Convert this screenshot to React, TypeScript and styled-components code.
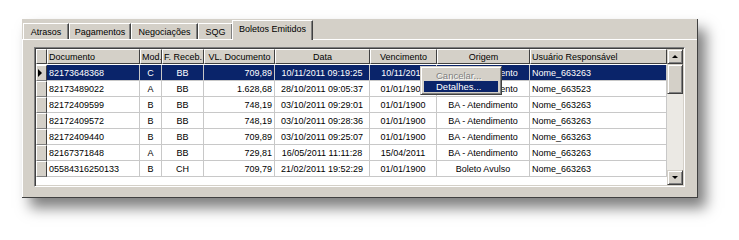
import React from 'react';
import styled, { createGlobalStyle } from 'styled-components';

const GlobalStyle = createGlobalStyle`
  html, body { margin: 0; padding: 0; background: #fff; }
  body {
    font-family: "Liberation Sans", Arial, sans-serif;
    font-size: 9px;
    color: #000;
  }
`;

const FACE = '#d4d0c8';
const SHADOW = '#808080';
const DARK = '#404040';
const HILITE = '#0a246a';
const LINE = '#c8c8c8';

const Stage = styled.div`
  width: 739px;
  height: 240px;
  padding: 19px 0 0 22px;
  box-sizing: border-box;
`;

const Window = styled.div`
  width: 676px;
  height: 179px;
  box-sizing: border-box;
  background: ${FACE};
  border-right: 1px solid ${DARK};
  border-bottom: 1px solid ${DARK};
  box-shadow: 8px 10px 13px rgba(0, 0, 0, 0.5);
  display: flex;
  flex-direction: column;
`;

const TabStrip = styled.div`
  display: flex;
  align-items: flex-end;
  height: 20px;
  padding-left: 1px;
  position: relative;
  z-index: 1;
`;

const Tab = styled.div<{ $w: number; $active?: boolean }>`
  width: ${p => p.$w}px;
  height: ${p => (p.$active ? 20 : 16)}px;
  margin: 0 ${p => (p.$active ? -1 : 0)}px ${p => (p.$active ? -1 : 0)}px;
  box-sizing: border-box;
  background: ${FACE};
  border-top: 1px solid #fff;
  border-left: 1px solid #fff;
  border-right: 1px solid ${DARK};
  box-shadow: inset -1px 0 0 ${SHADOW};
  display: flex;
  align-items: center;
  justify-content: center;
  padding-bottom: ${p => (p.$active ? 3 : 0)}px;
  white-space: nowrap;
`;

const Page = styled.div`
  flex: 1;
  border-top: 1px solid #fff;
  border-left: 1px solid #fff;
  padding: 7px 0 0 11px;
`;

const Grid = styled.div`
  position: relative;
  width: 651px;
  height: 140px;
  box-sizing: border-box;
  border-top: 1px solid ${SHADOW};
  border-left: 1px solid ${SHADOW};
  border-right: 1px solid #fff;
  border-bottom: 1px solid #fff;
  box-shadow: inset 1px 1px 0 ${DARK}, inset -1px -1px 0 ${FACE};
  padding: 1px;
  display: flex;
  background: #fff;
`;

const Table = styled.div`
  width: 631px;
  display: grid;
  grid-template-columns: 11px 93px 22px 42px 71px 95px 67px 93px 137px;
  grid-auto-rows: 16px;
  align-content: start;
  background: #fff;
`;

type Align = 'left' | 'center' | 'right';

const HeadCell = styled.div<{ $align: Align }>`
  height: 15px;
  box-sizing: border-box;
  background: ${FACE};
  border-top: 1px solid #fff;
  border-left: 1px solid #fff;
  border-right: 1px solid ${DARK};
  border-bottom: 1px solid ${DARK};
  display: flex;
  align-items: center;
  justify-content: ${p => (p.$align === 'center' ? 'center' : p.$align === 'right' ? 'flex-end' : 'flex-start')};
  padding: 0 1px;
  white-space: nowrap;
  overflow: hidden;
`;

const Cell = styled.div<{ $align: Align; $sel?: boolean }>`
  box-sizing: border-box;
  background: ${p => (p.$sel ? HILITE : '#fff')};
  color: ${p => (p.$sel ? '#fff' : '#000')};
  border-right: 1px solid ${LINE};
  border-bottom: 1px solid ${LINE};
  display: flex;
  align-items: center;
  justify-content: ${p => (p.$align === 'center' ? 'center' : p.$align === 'right' ? 'flex-end' : 'flex-start')};
  padding: 0 2px;
  white-space: nowrap;
  overflow: hidden;
`;

const Indicator = styled.div`
  box-sizing: border-box;
  background: ${FACE};
  border-top: 1px solid #fff;
  border-left: 1px solid #fff;
  border-right: 1px solid ${DARK};
  border-bottom: 1px solid ${SHADOW};
  display: flex;
  align-items: center;
  padding-left: 1px;
`;

const Arrow = styled.span<{ $dir: 'right' | 'up' | 'down' }>`
  width: 0;
  height: 0;
  border-style: solid;
  border-color: transparent;
  ${p =>
    p.$dir === 'right'
      ? `border-width: 4px 0 4px 4px; border-left-color: #000;`
      : p.$dir === 'up'
      ? `border-width: 0 3px 3px 3px; border-bottom-color: #000;`
      : `border-width: 3px 3px 0 3px; border-top-color: #000;`}
`;

const Scrollbar = styled.div`
  width: 16px;
  display: flex;
  flex-direction: column;
  background: #ebe9e4;
`;

const ScrollButton = styled.div<{ $h: number }>`
  height: ${p => p.$h}px;
  box-sizing: border-box;
  background: ${FACE};
  border-top: 1px solid ${FACE};
  border-left: 1px solid ${FACE};
  border-right: 1px solid ${DARK};
  border-bottom: 1px solid ${DARK};
  box-shadow: inset 1px 1px 0 #fff, inset -1px -1px 0 ${SHADOW};
  display: flex;
  align-items: center;
  justify-content: center;
`;

const Track = styled.div`
  flex: 1;
`;

/* popup menu floating over the grid */
const Menu = styled.div`
  position: absolute;
  left: 385px;
  top: 18px;
  width: 82px;
  box-sizing: border-box;
  background: ${FACE};
  border-top: 1px solid ${FACE};
  border-left: 1px solid ${FACE};
  border-right: 1px solid ${DARK};
  border-bottom: 1px solid ${DARK};
  box-shadow: inset 1px 1px 0 #fff, inset -1px -1px 0 ${SHADOW};
  padding: 3px 3px 2px;
  font-size: 9.5px;
`;

const MenuItem = styled.div<{ $disabled?: boolean; $hot?: boolean }>`
  height: 11px;
  line-height: 11px;
  padding-left: 12px;
  white-space: nowrap;
  background: ${p => (p.$hot ? HILITE : 'transparent')};
  color: ${p => (p.$hot ? '#fff' : p.$disabled ? SHADOW : '#000')};
  text-shadow: ${p => (p.$disabled ? '1px 1px 0 #fff' : 'none')};
`;

const tabs = [
  { label: 'Atrasos', w: 46 },
  { label: 'Pagamentos', w: 62 },
  { label: 'Negociações', w: 67 },
  { label: 'SQG', w: 35 },
  { label: 'Boletos Emitidos', w: 81, active: true },
];

const columns: { title: string; head: Align; body: Align }[] = [
  { title: 'Documento', head: 'left', body: 'left' },
  { title: 'Mod.', head: 'left', body: 'center' },
  { title: 'F. Receb.', head: 'left', body: 'center' },
  { title: 'VL. Documento', head: 'center', body: 'right' },
  { title: 'Data', head: 'center', body: 'center' },
  { title: 'Vencimento', head: 'center', body: 'center' },
  { title: 'Origem', head: 'center', body: 'center' },
  { title: 'Usuário Responsável', head: 'left', body: 'left' },
];

const rows: string[][] = [
  ['82173648368', 'C', 'BB', '709,89', '10/11/2011 09:19:25', '10/11/2011', 'BA - Atendimento', 'Nome_663263'],
  ['82173489022', 'A', 'BB', '1.628,68', '28/10/2011 09:05:37', '01/01/1900', 'BA - Atendimento', 'Nome_663523'],
  ['82172409599', 'B', 'BB', '748,19', '03/10/2011 09:29:01', '01/01/1900', 'BA - Atendimento', 'Nome_663263'],
  ['82172409572', 'B', 'BB', '748,19', '03/10/2011 09:28:36', '01/01/1900', 'BA - Atendimento', 'Nome_663263'],
  ['82172409440', 'B', 'BB', '709,89', '03/10/2011 09:25:07', '01/01/1900', 'BA - Atendimento', 'Nome_663263'],
  ['82167371848', 'A', 'BB', '729,81', '16/05/2011 11:11:28', '15/04/2011', 'BA - Atendimento', 'Nome_663263'],
  ['05584316250133', 'B', 'CH', '709,79', '21/02/2011 19:52:29', '01/01/1900', 'Boleto Avulso', 'Nome_663263'],
];

const selectedRow = 0;

export default function App() {
  return (
    <>
      <GlobalStyle />
      <Stage>
        <Window>
          <TabStrip>
            {tabs.map(t => (
              <Tab key={t.label} $w={t.w} $active={t.active}>
                {t.label}
              </Tab>
            ))}
          </TabStrip>
          <Page>
            <Grid>
              <Table>
                <HeadCell $align="left" />
                {columns.map(c => (
                  <HeadCell key={c.title} $align={c.head}>
                    {c.title}
                  </HeadCell>
                ))}
                {rows.map((r, i) => (
                  <React.Fragment key={r[0]}>
                    <Indicator>{i === selectedRow && <Arrow $dir="right" />}</Indicator>
                    {r.map((v, j) => (
                      <Cell key={j} $align={columns[j].body} $sel={i === selectedRow}>
                        {v}
                      </Cell>
                    ))}
                  </React.Fragment>
                ))}
              </Table>
              <Scrollbar>
                <ScrollButton $h={15}>
                  <Arrow $dir="up" />
                </ScrollButton>
                <ScrollButton $h={30} />
                <Track />
                <ScrollButton $h={15}>
                  <Arrow $dir="down" />
                </ScrollButton>
              </Scrollbar>
              <Menu>
                <MenuItem $disabled>Cancelar...</MenuItem>
                <MenuItem $hot>Detalhes...</MenuItem>
              </Menu>
            </Grid>
          </Page>
        </Window>
      </Stage>
    </>
  );
}
